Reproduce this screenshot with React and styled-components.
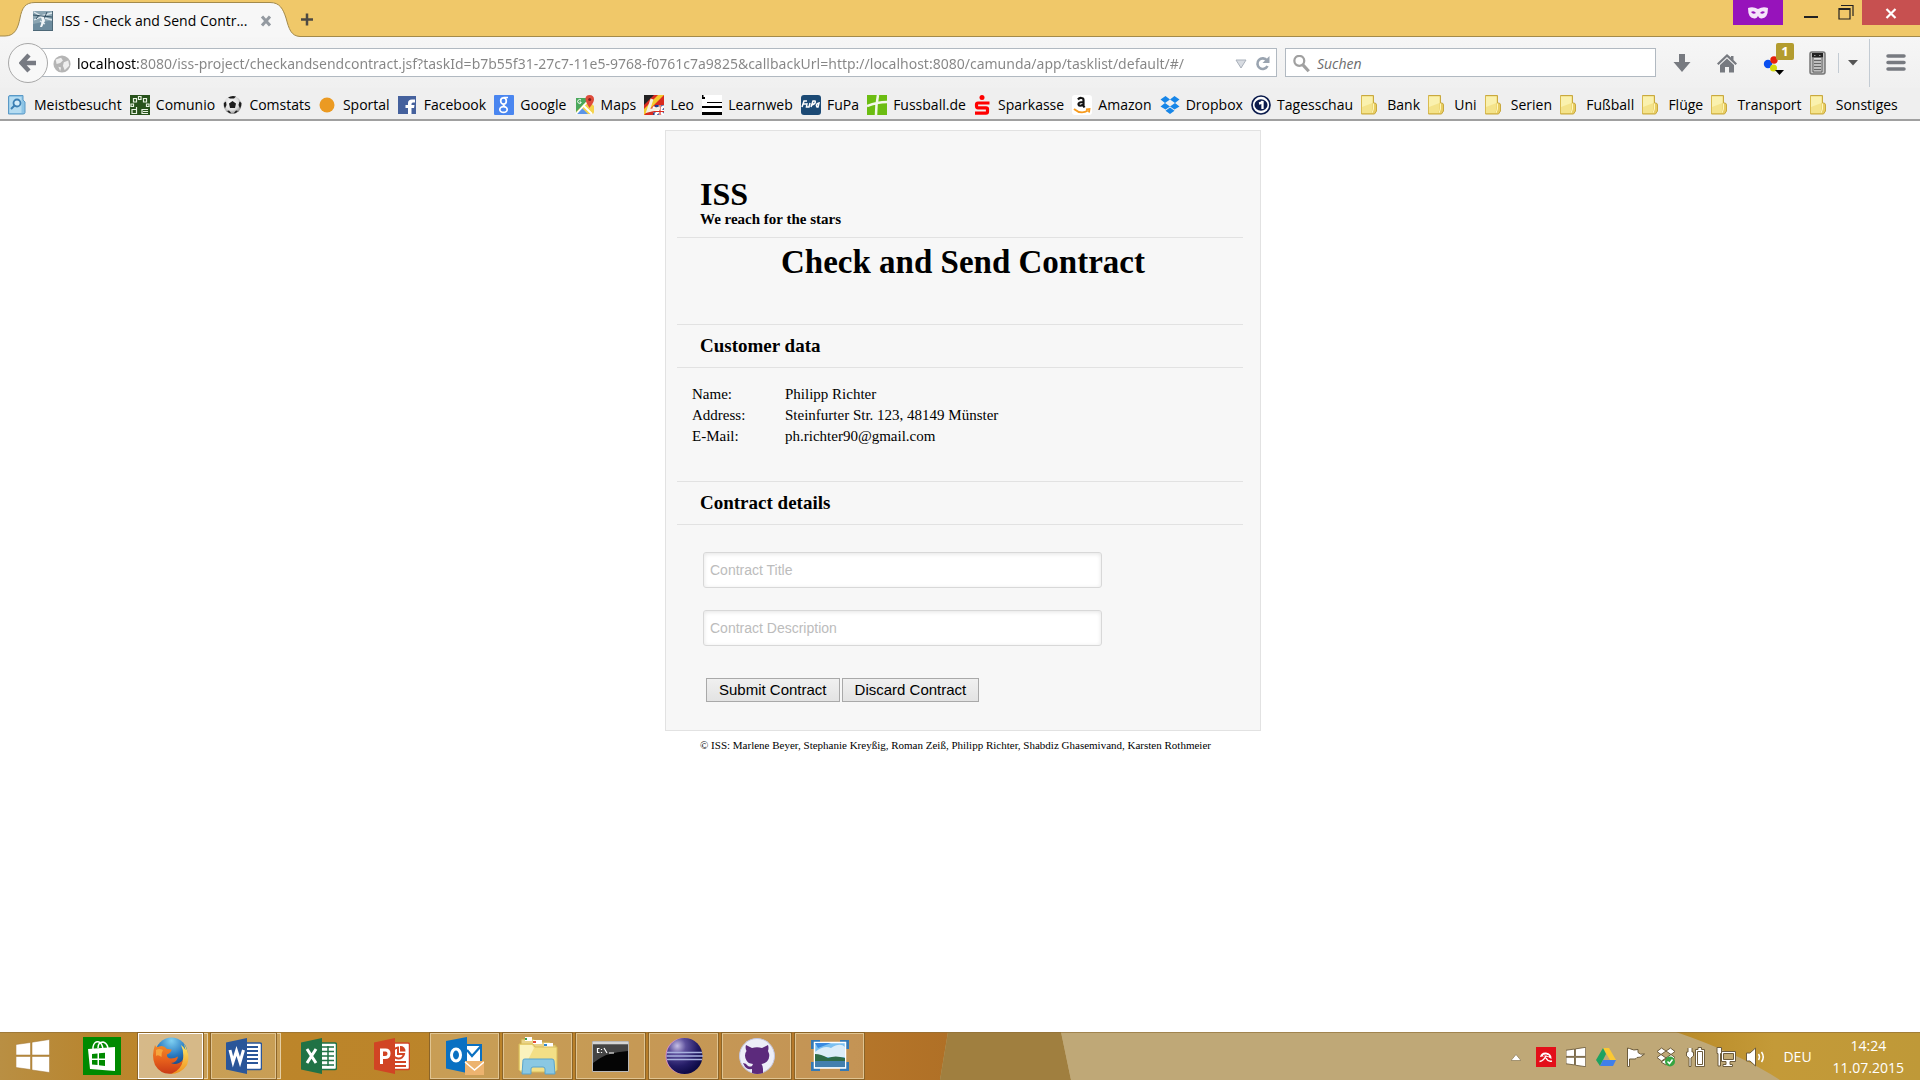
import React from "react";
import styled, { createGlobalStyle, css } from "styled-components";

const ui = `"Open Sans", "Noto Sans", sans-serif`;
const serif = `"Liberation Serif", serif`;
const sans = `"Liberation Sans", sans-serif`;

const GlobalStyle = createGlobalStyle`
  *, *::before, *::after { box-sizing: border-box; }
  body { margin: 0; background: #fff; color: #000; font-family: ${ui}; }
  svg { display: block; flex: none; }
  a { color: inherit; text-decoration: none; }
  button { font: inherit; color: inherit; margin: 0; padding: 0; border: 0; background: none; }
`;

const Screen = styled.div`
  display: flex;
  flex-direction: column;
  min-height: 100vh;
`;

/* ---------- browser window ---------- */

const TitleBar = styled.header`
  display: flex;
  align-items: stretch;
  height: 37px;
  background: #f0c869;
  box-shadow: inset 0 -1px #a38a4b;
`;

const Tab = styled.div`
  position: relative;
  display: flex;
  align-items: center;
  width: 300px;
  padding: 4px 28px 0 33px;
  gap: 8px;
`;

const TabShape = styled.svg`
  position: absolute;
  left: 0;
  top: 0;
`;

const TabTitle = styled.span`
  position: relative;
  flex: 1;
  font-size: 14px;
  line-height: 20px;
  white-space: nowrap;
`;

const IconButton = styled.button`
  position: relative;
  display: flex;
  align-items: center;
  justify-content: center;
  width: ${(p) => p.$w || 20}px;
`;

const WindowControls = styled.div`
  display: flex;
  align-items: flex-start;
  margin-left: auto;
`;

const ControlButton = styled(IconButton)`
  height: 25px;
  background: ${(p) => p.$bg || "none"};
`;

const Toolbar = styled.div`
  display: flex;
  align-items: center;
  height: 51px;
  padding-left: 8px;
  background: linear-gradient(#f6f6f6, #f0f0f0);
`;

const BackButton = styled.button`
  position: relative;
  z-index: 1;
  display: flex;
  align-items: center;
  justify-content: center;
  width: 40px;
  height: 40px;
  border: 1px solid #a8a8a8;
  border-radius: 50%;
  background: #f8f8f8;
`;

const Field = styled.div`
  display: flex;
  align-items: center;
  height: 29px;
  padding-top: 2px;
  border: 1px solid #b1b9c1;
  background: #fff;
`;

const AddressField = styled(Field)`
  flex: 1;
  margin-left: -8px;
  padding-right: 6px;
  padding-left: 12px;
  gap: 6px;
`;

const SearchField = styled(Field)`
  width: 371px;
  margin: 0 6px 0 8px;
  padding-left: 7px;
  gap: 6px;
`;

const FieldInput = styled.input`
  flex: 1;
  min-width: 0;
  padding: 0;
  border: 0;
  outline: 0;
  background: none;
  font: 14px/20px ${ui};
  color: #858585;
  &::placeholder { color: #6d6d6d; opacity: 1; font-style: italic; }
`;

const AddressInput = styled(FieldInput)`
  color: transparent;
  font-family: "Noto Sans", sans-serif;
  background: linear-gradient(90deg, #000 61px, #858585 61px);
  -webkit-background-clip: text;
  background-clip: text;
`;

const Divider = styled.span`
  width: 1px;
  height: ${(p) => p.$h}px;
  margin: 0 ${(p) => p.$m || 0}px;
  background: #c3cbd3;
`;

const BadgeHolder = styled(IconButton)`
  height: 40px;
`;

const Badge = styled.span`
  position: absolute;
  top: 0;
  right: 3px;
  width: 18px;
  height: 17px;
  border-radius: 2px;
  background: #b39c2f;
  color: #fff;
  font: bold 13px/16px ${ui};
  text-align: center;
`;

const Bookmarks = styled.nav`
  display: flex;
  align-items: center;
  justify-content: space-between;
  height: 33px;
  padding: 2px 22px 0 8px;
  border-bottom: 2px solid #a0a0a0;
  background: #efefef;
`;

const Bookmark = styled.a`
  display: flex;
  align-items: center;
  gap: 6px;
  font-size: 14px;
  line-height: 20px;
  white-space: nowrap;
`;

/* ---------- page ---------- */

const Page = styled.main`
  flex: 1;
  padding: 9px 0 0 6px;
  font-family: ${serif};
`;

const Panel = styled.section`
  max-width: 596px;
  margin: 0 auto;
  padding: 46px 17px 28px 11px;
  border: 1px solid #e2e2e2;
  background: #f7f7f7;
`;

const Brand = styled.div`
  padding: 0 0 10px 23px;
  border-bottom: 1px solid #e2e2e2;
`;

const BrandName = styled.h1`
  margin: 0;
  font-size: 32px;
  line-height: 34px;
`;

const Tagline = styled.p`
  margin: 0;
  font-size: 15px;
  font-weight: bold;
  line-height: 16px;
`;

const PageTitle = styled.h2`
  margin: 0;
  padding: 5px 0 43px 6px;
  font-size: 33px;
  line-height: 38px;
  text-align: center;
`;

const SectionTitle = styled.h3`
  margin: 0;
  padding: 11px 0 11px 23px;
  border: solid #e2e2e2;
  border-width: 1px 0;
  font-size: 19px;
  line-height: 20px;
`;

const DataTable = styled.table`
  margin: 16px 0 34px 15px;
  border-collapse: collapse;
  font-size: 15px;
  th, td { height: 21px; padding: 0; line-height: 21px; text-align: left; font-weight: normal; }
  th { width: 93px; }
`;

const ContractForm = styled.form`
  padding: 27px 0 0 26px;
`;

const TextInput = styled.input`
  display: block;
  width: 399px;
  max-width: 100%;
  height: 36px;
  margin-bottom: 22px;
  padding: 0 6px;
  border: 1px solid #d8d8d8;
  border-radius: 3px;
  background: #fff;
  box-shadow: inset 0 1px 4px #e4e4e4;
  font: 14px/20px ${sans};
  &::placeholder { color: #bcbcbc; opacity: 1; }
`;

const Actions = styled.div`
  display: flex;
  gap: 2px;
  padding: 10px 0 0 3px;
`;

const ActionButton = styled.button`
  height: 24px;
  padding: 0 12px;
  border: 1px solid #a9a9a9;
  background: linear-gradient(#f0f0f0, #e3e3e3);
  color: #000;
  font: 15px/20px ${sans};
`;

const Credits = styled.footer`
  max-width: 596px;
  margin: 0 auto;
  padding: 5px 0 0 35px;
  font-size: 11px;
  line-height: 18px;
  white-space: nowrap;
`;

/* ---------- taskbar ---------- */

const Taskbar = styled.footer`
  position: relative;
  display: flex;
  height: 48px;
  background: #bfa877;
  color: #fff;
  font-size: 14px;
`;

const Wallpaper = styled.svg`
  position: absolute;
  inset: 0;
  width: 100%;
  height: 100%;
`;

const framed = css`
  border: 1px solid #e0c491;
  outline: 1px solid #8b6428;
  outline-offset: 0;
  background: rgba(228, 210, 178, 0.32);
`;

const TaskButton = styled.button`
  position: relative;
  display: flex;
  align-items: center;
  justify-content: center;
  width: ${(p) => p.$w || 69}px;
  margin: 1px 4px 1px 0;
  ${(p) => p.$open && framed}
  ${(p) => p.$active && css`background: rgba(232, 222, 205, 0.58); border-color: #fff;`}
  ${(p) => p.$stack && css`
    width: 65px;
    margin-right: 8px;
    &::after {
      content: "";
      position: absolute;
      top: -1px;
      right: -6px;
      bottom: -1px;
      width: 4px;
      border: 1px solid #e5cfa4;
      border-left: 0;
      background: rgba(228, 210, 178, 0.32);
    }
  `}
`;

const Tray = styled.div`
  position: relative;
  display: flex;
  align-items: center;
  gap: 10px;
  margin-left: auto;
  padding: 2px 16px 0 0;
`;

const Language = styled.button`
  margin-left: 7px;
  line-height: 20px;
`;

const Clock = styled.time`
  margin-left: 11px;
  line-height: 22px;
  text-align: center;
`;

/* ---------- icons ---------- */

const Svg = ({ s = 20, w, h, box = "0 0 20 20", children }) => (
  <svg width={w || s} height={h || s} viewBox={box} aria-hidden="true" fill="none">
    {children}
  </svg>
);

const Folder = () => (
  <Svg>
    <path d="M0 1.500Q0 .5 1 .5H12.500V8H13.500Q15.500 8 15.500 10V16L13.500 19H1Q0 19 0 18Z" fill="#e8cd62" stroke="#c9a93f" />
    <path d="M1 1.500H11.500V14.500L10 18H1Z" fill="#f4e38a" />
    <path d="M1 1.500H11.500V8L1 12Z" fill="#faf1ae" />
    <path d="M12.500 8.500V14L11 18" stroke="#fff6bb" />
  </Svg>
);

const favicons = {
  most: <Svg><path d="M2 .5H15V5L17 7V17.500Q17 19 15 19H.5V2Q.5 .5 2 .5Z" fill="#8cc4e6" stroke="#5a99c6" /><path d="M1.500 2H13.500V18H1.500Z" fill="#b5dcf1" /><circle cx="9" cy="8" r="3.500" fill="#d5edf9" stroke="#3b7fb3" strokeWidth="1.800" /><path d="M6.500 10.500L3 14" stroke="#3b7fb3" strokeWidth="2" /></Svg>,
  comunio: <Svg><path d="M0 0H20V20H0Z" fill="#28521c" /><g stroke="#e8f2e2" strokeWidth="1.200"><path d="M3.500 3.500H6.500V7H3.500ZM8.500 1.500H11V4.500H8.500ZM13.500 3.500H16.500V7H13.500ZM1 9H3.500V11.500H1ZM16.500 9H19V11.500H16.500ZM6.500 12V18.500H2V14.500H6.500M18 14.500H12V18.500H18M13 16.500H18" /></g></Svg>,
  ball: (
    <Svg>
      <defs><radialGradient id="ballShade" cx=".45" cy=".4" r=".6"><stop stopColor="#fff" /><stop offset=".65" stopColor="#ddd" /><stop offset="1" stopColor="#8a8a8a" /></radialGradient></defs>
      <circle cx="9.500" cy="10" r="9" fill="url(#ballShade)" />
      <path d="M9.500 6L13 8.500L12 13H7L6 8.500ZM5 2.500Q9 0 13 1.500L11 3.500H7ZM.8 8L3 6.500L3.500 10L2 13.500Q.5 11 .8 8ZM18.500 8L16.500 6.500L15.500 10L17 13.500Q18.500 11 18.500 8ZM4 16L6 15.500L8.500 18.500Q6 18.500 4 16ZM15 16L13 15.500L10.500 18.500Q13 18.500 15 16Z" fill="#1c1c1c" />
    </Svg>
  ),
  sportal: <Svg w={18} box="0 0 18 20"><circle cx="8" cy="10" r="7.500" fill="#eb9a22" /></Svg>,
  facebook: <Svg><path d="M0 1H18V19H0Z" fill="#45619d" /><path d="M17 4.500V7.500H15Q13.500 7.500 13.500 9V10H16.500L16 13H13.500V19H10V13H7.500V10H10V8Q10 4.500 14 4.500Z" fill="#fff" /></Svg>,
  google: <Svg><rect width="20" height="20" rx="1" fill="#4a86f0" /><g stroke="#fff" strokeWidth="1.700"><ellipse cx="9.500" cy="6" rx="2.800" ry="3.200" /><ellipse cx="9.500" cy="14.500" rx="3.700" ry="2.900" /><path d="M9.500 2.500H14M9 9.500L11 12" /></g></Svg>,
  maps: <Svg><path d="M1 3H14V19H1Z" fill="#4aa85b" /><path d="M1 17L13 5L19 11V17Q19 19 17 19H3Z" fill="#f5d34c" /><path d="M6 12L13 19H2Z" fill="#5b95e8" /><path d="M1 19L13 6M8 10L17 19" stroke="#fff" strokeWidth="1.800" /><path d="M10.500 4Q10.500 0 14.500 0Q19 0 19 4.500Q19 7 14.500 13Q10.500 7 10.500 4Z" fill="#df4b3b" /><circle cx="14.700" cy="4.500" r="1.500" fill="#7d201a" /><path d="M6 5A2 2 0 1 0 6 8V7H4.500" stroke="#fff" /></Svg>,
  leo: <Svg><path d="M0 0H20V20H0Z" fill="#d92b20" /><path d="M0 0H10L0 10Z" fill="#222" /><path d="M14 0H20L0 20V14Z" fill="#f4c92d" /><path d="M11 10H20V20H9Z" fill="#223b8c" /><path d="M9 12L20 20M20 11L11 20M16 10V20M9 16H20" stroke="#fff" strokeWidth="2.500" /><path d="M16 10V20M9 16.500H20" stroke="#d92b20" strokeWidth="1.200" /><path d="M8 4L4 16L16 13" stroke="#f4efe0" strokeWidth="3" /></Svg>,
  learnweb: <Svg><path d="M0 0H20V20H0Z" fill="#fff" /><path d="M0 0H1.500V2H3V4H0ZM5 7H20V8H5ZM0 11H20V13H0ZM0 17H20V20H0Z" fill="#000" /></Svg>,
  fupa: <Svg><rect width="20" height="20" rx="3" fill="#1c4a75" /><path d="M1 12L3 6H6M2 9H5M6 8L5.500 12H8L9 8M10 12L12 6H14Q15.500 8 11 10M16 12Q14 9 18 8L17 12Z" stroke="#fff" strokeWidth="1.500" /></Svg>,
  fussball: <Svg><path d="M0 0H20V20H0Z" fill="#6cbd12" /><path d="M11 0Q9 10 9 20M0 11Q10 7 20 7" stroke="#f3f8ea" strokeWidth="2.500" /></Svg>,
  sparkasse: <Svg w={18} box="0 0 18 20"><circle cx="8" cy="2.500" r="2.500" fill="#f00" /><path d="M15.500 8H4Q2.500 8 2.500 9.500V11Q2.500 12.800 4 12.800H12Q13.500 12.800 13.500 14V16.500Q13.500 18.200 12 18.200H1" stroke="#f00" strokeWidth="3.200" /></Svg>,
  amazon: <Svg><rect width="20" height="20" rx="3" fill="#fff" /><path d="M6 4.500Q7.500 2.500 9.500 3Q11.500 3 11.500 5V11L12.500 12.500M11.500 7Q6 7 6.500 9.500Q7.500 12 11.500 9.500" stroke="#111" strokeWidth="2.200" /><path d="M2 14Q9 20 16 15.500M14 14.500L17.500 14L17 17.500" stroke="#f79b1e" strokeWidth="1.800" /></Svg>,
  dropbox: <Svg><path d="M5.500 1L10 4.500L5 8L.5 4.500ZM14.500 1L19.500 4.500L15 8L10 4.500ZM5 8L10 11.500L5.500 14.500L.5 11.500ZM15 8L19.500 11.500L14.500 14.500L10 11.500ZM10 12.500L14.500 15.800L10 19L5.500 15.800Z" fill="#1786e8" /></Svg>,
  tagesschau: <Svg><circle cx="10" cy="10" r="9" fill="#fff" stroke="#0c1c4d" strokeWidth="1.700" /><ellipse cx="10" cy="10" rx="6.500" ry="5.800" fill="#0c1c4d" /><path d="M8 8.500Q11 8 11.500 6V14" stroke="#fff" strokeWidth="2.300" /></Svg>,
  folder: <Folder />,
};

const bookmarks = [
  ["most", "Meistbesucht"], ["comunio", "Comunio"], ["ball", "Comstats"], ["sportal", "Sportal"],
  ["facebook", "Facebook"], ["google", "Google"], ["maps", "Maps"], ["leo", "Leo"],
  ["learnweb", "Learnweb"], ["fupa", "FuPa"], ["fussball", "Fussball.de"], ["sparkasse", "Sparkasse"],
  ["amazon", "Amazon"], ["dropbox", "Dropbox"], ["tagesschau", "Tagesschau"], ["folder", "Bank"],
  ["folder", "Uni"], ["folder", "Serien"], ["folder", "Fußball"], ["folder", "Flüge"],
  ["folder", "Transport"], ["folder", "Sonstiges"],
];

const WindowsLogo = ({ s, edge }) => (
  <Svg s={s} box="0 0 34 34">
    <path d="M0 5.500L14.500 3.500V16H0ZM16 3.200L33.500 .5V16H16ZM0 17.500H14.500V30.500L0 28.500ZM16 17.500H33.500V33.500L16 31Z" fill="#fff" stroke={edge || "#a27634"} strokeWidth={edge ? 1.500 : 0.500} />
  </Svg>
);

const OfficeIcon = ({ color, letter, children }) => (
  <Svg s={36} box="0 0 36 36">
    <path d="M20 5H34Q35.500 5 35.500 6.500V30Q35.500 31.500 34 31.500H20Z" fill="#fff" stroke={color} strokeWidth="1.500" />
    {children}
    <path d="M0 4.500L21 0V36L0 31.500Z" fill={color} />
    <path d={letter} stroke="#fff" strokeWidth="3" />
  </Svg>
);

const taskIcons = {
  firefox: (
    <Svg s={38} box="0 0 38 38">
      <defs>
        <linearGradient id="foxBody" x1="0" y1="0" x2="0" y2="1"><stop stopColor="#f08a2a" /><stop offset=".5" stopColor="#e8621c" /><stop offset="1" stopColor="#c93a16" /></linearGradient>
        <linearGradient id="foxTail" x1="0" y1="0" x2="0" y2="1"><stop stopColor="#fde76a" /><stop offset="1" stopColor="#f0901c" /></linearGradient>
        <radialGradient id="foxGlobe" cx=".5" cy=".1" r=".9"><stop stopColor="#7fd0f2" /><stop offset=".5" stopColor="#2b7cc2" /><stop offset="1" stopColor="#12356c" /></radialGradient>
      </defs>
      <circle cx="19.500" cy="16.500" r="16" fill="url(#foxGlobe)" />
      <path d="M32 7Q39 18 35 28Q29 37 18 37Q29 32 31 22Q32 14 29 8Q32 10 33.500 13Z" fill="url(#foxTail)" />
      <path d="M3 8Q4 11 7 9.500Q12 8 15 12L19.500 12.500Q19.500 15.500 15 17.500Q14.500 21 19 21.500Q23 21.500 26 19.500Q25 26 19 26Q25 29 31 23Q29 33 20 36.500Q9 38 3 28Q-1 19 3 8Z" fill="url(#foxBody)" />
      <path d="M4 13Q7 11 11 13Q9 16 9.500 20Q6 17 4 19Z" fill="#f6a53c" />
    </Svg>
  ),
  word: <OfficeIcon color="#2a5699" letter="M4 12L7 24L10.500 13L14 24L17.500 12"><path d="M21 9H32M21 13H32M21 17H32M21 21H32M21 25H32" stroke="#2a5699" strokeWidth="2" /></OfficeIcon>,
  excel: <OfficeIcon color="#207245" letter="M6 11L15 25M15 11L6 25"><path d="M21 9H33M21 13.500H33M21 18H33M21 22.500H33M21 27H33M27 8V28" stroke="#207245" strokeWidth="1.500" /></OfficeIcon>,
  ppt: <OfficeIcon color="#d14424" letter="M7.500 26V12H11.500Q15 12 15 15.500Q15 19.500 11 19.500H8"><path d="M24 9.500A5.500 5.500 0 1 0 30 16H24ZM21 24H32M21 28H32" stroke="#d14424" strokeWidth="2" /><path d="M26 8A5 5 0 0 1 31.500 13.500H26Z" fill="#d14424" /></OfficeIcon>,
  outlook: (
    <Svg s={38} box="0 0 38 38">
      <path d="M19 8H35V25H19Z" fill="#fff" stroke="#0a70c2" strokeWidth="2" />
      <path d="M21 13L26 19L35 9" stroke="#0a70c2" strokeWidth="2.200" />
      <path d="M0 4L21 0V36L0 31.500Z" fill="#0a70c2" />
      <ellipse cx="10" cy="18" rx="4.500" ry="6" stroke="#fff" strokeWidth="3" />
      <path d="M19 24H38V38H19Z" fill="#ecb36f" /><path d="M19 25L28.500 33L38 25" stroke="#fff" strokeWidth="1.500" />
    </Svg>
  ),
  explorer: (
    <Svg s={40} box="0 0 40 40">
      <path d="M3 3H16L18 6H32L34 9H38V20H3Z" fill="#ead489" stroke="#c6a848" />
      <path d="M7 1H14V5H7ZM15 4H24V8H15ZM26 7H35V11H26Z" fill="#fff" />
      <path d="M7 2H9V4H7Z" fill="#37a04e" /><path d="M15 5H18V7H15Z" fill="#e54b35" /><path d="M26 8H29V10H26Z" fill="#2c87cf" />
      <path d="M1 8H15L17 11H39V34L37 36H3L1 34Z" fill="#f3df86" stroke="#d9bd5b" />
      <path d="M2 9H14L16 12L5 34H2Z" fill="#fbf2bd" />
      <path d="M5 24Q5 23 7 23H34Q36 23 36 25L37 38H27V33Q27 31 25 31H15Q13 31 13 33V38H4Z" fill="#8ac8e3" stroke="#5aa4cb" />
    </Svg>
  ),
  cmd: (
    <Svg w={37} h={31} box="0 0 37 31">
      <path d="M.5 .5H36.500V30.500H.5Z" fill="#050505" stroke="#b9b9b9" /><path d="M1 1H36V3.500H1Z" fill="#d4d4d4" />
      <path d="M1 4H36V10Q14 11 1 22Z" fill="#444" />
      <path d="M7.500 7.500H5.500V11.500H7.500M9.500 8V9M9.500 11V12M12 7L15 12M17 12H22" stroke="#fff" strokeWidth="1.200" />
    </Svg>
  ),
  eclipse: (
    <Svg s={38} box="0 0 38 38">
      <defs><radialGradient id="ecl" cx=".3" cy=".22" r=".8"><stop stopColor="#c6bfe6" /><stop offset=".3" stopColor="#5d509c" /><stop offset=".7" stopColor="#241c66" /><stop offset="1" stopColor="#0d0a45" /></radialGradient></defs>
      <circle cx="18.500" cy="19" r="18" fill="#d991c6" /><circle cx="19.500" cy="19" r="18" fill="url(#ecl)" />
      <path d="M2 15.500H37M1.500 19H38M2 22.500H37" stroke="#a9b2df" strokeWidth="1.300" />
    </Svg>
  ),
  github: (
    <Svg s={38} box="0 0 38 38">
      <circle cx="19" cy="19" r="17.500" fill="#eceef8" stroke="#c3c6e2" />
      <path d="M8 8L14 11Q19 9.500 24 11L30 8Q31 11 30 14Q33 20 29 24.500Q27 26.500 23.500 27Q25 29 25 32V36Q19 38 14 36V32Q8 33 6 28L5 26Q8 26 10 29Q12 30 14 29L15 27Q10 26.500 8.500 23.500Q5.500 18 8.500 14Q7 11 8 8Z" fill="#5c2a7c" />
    </Svg>
  ),
  photo: (
    <Svg w={38} h={34} box="0 0 38 34">
      <path d="M0 1H9V10H0ZM29 1H38V10H29ZM0 23H9V32H0ZM29 23H38V32H29Z" fill="#3479b5" />
      <path d="M3.500 3.500H34.500V29H3.500Z" fill="#7cc0f0" stroke="#fff" strokeWidth="1.500" />
      <path d="M4 4H20L7 9Z" fill="#3a8ae0" /><path d="M4 13Q13 6 20 9Q29 3 34 8V18H4Z" fill="#dcedf8" />
      <path d="M4 15Q10 15 17 19Q24 16 34 19V23H4Z" fill="#2e6b47" /><path d="M4 22H34V28H4Z" fill="#427fae" />
    </Svg>
  ),
};

const tasks = [
  { id: "firefox", label: "Firefox", open: true, active: true, stack: true },
  { id: "word", label: "Word", open: true, stack: true },
  { id: "excel", label: "Excel" },
  { id: "ppt", label: "PowerPoint" },
  { id: "outlook", label: "Outlook", open: true },
  { id: "explorer", label: "Explorer", open: true },
  { id: "cmd", label: "Command prompt", open: true },
  { id: "eclipse", label: "Eclipse", open: true },
  { id: "github", label: "GitHub", open: true },
  { id: "photo", label: "Snapshot", open: true },
];

const dark = "#6d5c3c";
const trayIcons = [
  ["Avira", <Svg key="i"><path d="M0 0H20V20H0Z" fill="#e30f19" /><path d="M4 10Q5 5 10 5.500Q16 6.500 15.500 12Q11 8 4 10Z" fill="#fff" /><path d="M11 7Q8 14 3.500 14.500M10 11Q12 15 16 14" stroke="#fff" strokeWidth="1.400" /><path d="M7 8.500Q10 7 13 9" stroke="#e30f19" /></Svg>],
  ["Windows", <WindowsLogo key="i" s={20} edge={dark} />],
  ["Drive", <Svg key="i"><path d="M7 1H13L20 13H14Z" fill="#fbc934" /><path d="M7 1L10 7L4 19L0 13Z" fill="#1da261" /><path d="M7 13H20L17 19H4Z" fill="#3f7fea" /></Svg>],
  ["Action center", <Svg key="i"><path d="M1.500 1V19.500H3.500V12H9Q10 12 11 10.500Q14 11.500 18.500 7Q14 8 12 5.500V2.500Q8 4 3.500 1.500Z" fill="#fff" stroke={dark} /></Svg>],
  ["Dropbox", <Svg key="i"><path d="M5.500 1L10 4L5 7.500L1 4.500ZM14.500 1L19 4.500L15 7.500L10 4ZM5 7.500L10 11L5.500 14L1 10.500ZM15 7.500L19 10.500L14.500 14L10 11ZM10 12L14 15L10 18L5 15Z" fill="#fff" stroke={dark} /><circle cx="14" cy="14.500" r="5" fill="#35a542" /><path d="M11.500 14.500L13.500 16.500L16.500 12.500" stroke="#fff" strokeWidth="1.500" /></Svg>],
  ["Power", <Svg key="i"><path d="M9.500 2.500H12V.5H15.500V2.500H18.500V19.500H9.500Z" fill="#fff" stroke={dark} /><path d="M11.500 4.500H16.500V17.500H11.500Z" stroke={dark} /><path d="M2 1V5H.5V9L3 11V19.500H5V11L7.500 9V5H6V1" fill="#fff" stroke={dark} /></Svg>],
  ["Network", <Svg key="i"><path d="M5.500 4.500H19.500V14.500H14V17.500H16.500V19.500H7V17.500H10V14.500H5.500Z" fill="#fff" stroke={dark} /><path d="M7.500 6.500H17.500V12.500H7.500Z" fill="#c2a972" stroke={dark} /><path d="M1 .5H5.500V6.500H4.500V19H2V6.500H1Z" fill="#fff" stroke={dark} /></Svg>],
  ["Volume", <Svg key="i"><path d="M.5 6H4L9.500 1V19L4 14H.5Z" fill="#fff" stroke={dark} /><path d="M12.500 7Q14.500 10 12.500 13M15.500 5Q19 10 15.500 15" stroke="#fff" strokeWidth="1.500" /></Svg>],
];

function BrowserChrome() {
  return (
    <>
      <TitleBar>
        <Tab>
          <TabShape width="300" height="37" aria-hidden="true">
            <path d="M0 37V36H5C15 36 18 28 20 18C22 8 25 2.500 35 2.500H270C280 2.500 283 9 286 18C289 29 291 36 300 36.500V37Z" fill="#f7f7f7" />
            <path d="M0 36H5C15 36 18 28 20 18C22 8 25 2.500 35 2.500H270C280 2.500 283 9 286 18C289 29 291 36 300 36.500" fill="none" stroke="#a38a4b" />
          </TabShape>
          <IconButton as="span">
            <Svg>
              <rect width="20" height="20" rx="1" fill="#8ba5b2" />
              <path d="M0 13L20 9V20H0Z" fill="#6d8c9e" />
              <path d="M1 1L8 5L19 2M1 9L8 6L19 9M7 10L12 13" stroke="#dfe9ee" strokeWidth="1.300" />
              <path d="M0 4L19 6M3 8L6 4M14 1L11 8" stroke="#29475a" strokeWidth=".9" />
              <path d="M8 6H11L12 10L9 16H7L9 10Z" fill="#f1f6f8" />
              <path d="M0 19.500H20M19.500 0V20" stroke="#4d6877" />
            </Svg>
          </IconButton>
          <TabTitle>ISS - Check and Send Contr...</TabTitle>
          <IconButton $w={12} aria-label="Close tab">
            <Svg s={12} box="0 0 12 12"><path d="M2 1.500L10 10.500M10 1.500L2 10.500" stroke="#949aa1" strokeWidth="3" /></Svg>
          </IconButton>
        </Tab>
        <IconButton $w={14} aria-label="New tab">
          <Svg s={14} box="0 0 14 14"><path d="M7 1.500V13.500M1 7.500H13" stroke="#4d4a43" strokeWidth="2.500" /></Svg>
        </IconButton>
        <WindowControls>
          <ControlButton $w={50} $bg="#9713bb" as="span">
            <Svg w={20} h={12} box="0 0 20 12"><path d="M0 1Q5 -1 10 2Q15 -1 20 1Q20 12 13 11.500Q11 11 10 9Q9 11 7 11.500Q0 12 0 1Z" fill="#f5e4fa" /><path d="M3 5Q6 3 8 6Q5 8 3 5ZM17 5Q14 3 12 6Q15 8 17 5Z" fill="#9713bb" /></Svg>
          </ControlButton>
          <ControlButton $w={55} aria-label="Minimize">
            <Svg w={14} h={10} box="0 0 14 10"><path d="M0 8H14V10H0Z" fill="#222" /></Svg>
          </ControlButton>
          <ControlButton $w={24} aria-label="Restore">
            <Svg w={24} h={15} box="0 0 24 15"><path d="M1 3.500H12V14H1ZM.5 4.500H12.500M3 .5H15V11" stroke="#222" strokeWidth="1.200" /></Svg>
          </ControlButton>
          <ControlButton $w={58} $bg="#c75050" aria-label="Close">
            <Svg s={12} box="0 0 12 12"><path d="M1.500 2L10.500 11M10.500 2L1.500 11" stroke="#fff" strokeWidth="2.200" /></Svg>
          </ControlButton>
        </WindowControls>
      </TitleBar>

      <Toolbar>
        <BackButton aria-label="Back">
          <Svg w={18} h={20} box="0 0 18 20"><path d="M10 2L2.500 10L10 18M3 10H17" stroke="#777a82" strokeWidth="4.500" /></Svg>
        </BackButton>
        <AddressField>
          <Svg s={18}><circle cx="10" cy="10" r="9.500" fill="#b5b5b5" /><path d="M3 5L9 3L11 6L8 9L4 10ZM12 8L17 6L18 12L13 17L11 12ZM6 13L9 14L8 18Z" fill="#eee" /></Svg>
          <AddressInput
            aria-label="Address"
            defaultValue="localhost:8080/iss-project/checkandsendcontract.jsf?taskId=b7b55f31-27c7-11e5-9768-f0761c7a9825&callbackUrl=http://localhost:8080/camunda/app/tasklist/default/#/"
          />
          <IconButton $w={14} aria-label="History">
            <Svg w={12} h={10} box="0 0 12 10"><path d="M1 1H11L6 9Z" fill="#d8dce2" stroke="#a9b0ba" /></Svg>
          </IconButton>
          <IconButton $w={16} aria-label="Reload">
            <Svg s={15} box="0 0 15 15"><path d="M12 4.500A5.300 5.300 0 1 0 12.500 10" stroke="#9aa4b0" strokeWidth="2.600" /><path d="M14.500 0V7H7.500Z" fill="#9aa4b0" /></Svg>
          </IconButton>
        </AddressField>
        <SearchField>
          <Svg s={18}><circle cx="7" cy="6.500" r="5.500" stroke="#a0a0a0" strokeWidth="2.500" /><path d="M11 11L17.500 18" stroke="#a0a0a0" strokeWidth="3.500" /></Svg>
          <FieldInput aria-label="Suchen" placeholder="Suchen" />
        </SearchField>
        <IconButton $w={40} aria-label="Downloads"><Svg><path d="M7 1H13V9H18.500L10 19L1.500 9H7Z" fill="#777a80" /></Svg></IconButton>
        <IconButton $w={49} aria-label="Home"><Svg><path d="M10 1L14 4.500V3H16.500V7L20 10.500L18.500 12L10 4L1.500 12L0 10.500Z" fill="#777a80" /><path d="M10 5.500L17 12V19.500H12V14H8V19.500H3V12Z" fill="#777a80" /></Svg></IconButton>
        <BadgeHolder $w={46} aria-label="Extension">
          <Svg s={24} box="0 0 24 24"><circle cx="6" cy="13" r="4.200" fill="#0a4ff0" /><circle cx="12" cy="9" r="3.700" fill="#e6200a" /><circle cx="11.500" cy="17" r="3.500" fill="#d5d80a" /><path d="M13 19H22L17.500 24Z" fill="#000" /></Svg>
          <Badge>1</Badge>
        </BadgeHolder>
        <IconButton $w={41} aria-label="Tool"><Svg w={18} h={24} box="0 0 18 24"><rect x="1" y="1" width="15" height="22" rx="2" fill="#c4c4c4" stroke="#777" strokeWidth="1.500" /><path d="M3 2H14V6.500H3Z" fill="#222" /><path d="M5 4.500H6.500M10 4.500H11.500" stroke="#999" /><path d="M4 7V21H13V7" fill="#ddd" stroke="#555" /><path d="M5 9.500H12M5 12.500H12M5 15.500H12M5 18.500H12" stroke="#666" strokeWidth="1.300" /></Svg></IconButton>
        <Divider $h={20} />
        <IconButton $w={28} aria-label="More"><Svg w={10} h={6} box="0 0 10 6"><path d="M0 0H10L5 5.500Z" fill="#555" /></Svg></IconButton>
        <Divider $h={48} $m={2} />
        <IconButton $w={48} aria-label="Menu"><Svg><path d="M2 3H18M2 9.500H18M2 16H18" stroke="#777a80" strokeWidth="3.500" strokeLinecap="round" /></Svg></IconButton>
      </Toolbar>

      <Bookmarks aria-label="Bookmarks">
        {bookmarks.map(([icon, name]) => (
          <Bookmark key={name} href="#">
            {favicons[icon]}
            {name}
          </Bookmark>
        ))}
      </Bookmarks>
    </>
  );
}

function ContractPage() {
  return (
    <Page>
      <Panel>
        <Brand>
          <BrandName>ISS</BrandName>
          <Tagline>We reach for the stars</Tagline>
        </Brand>
        <PageTitle>Check and Send Contract</PageTitle>
        <SectionTitle>Customer data</SectionTitle>
        <DataTable>
          <tbody>
            <tr><th scope="row">Name:</th><td>Philipp Richter</td></tr>
            <tr><th scope="row">Address:</th><td>Steinfurter Str. 123, 48149 Münster</td></tr>
            <tr><th scope="row">E-Mail:</th><td>ph.richter90@gmail.com</td></tr>
          </tbody>
        </DataTable>
        <SectionTitle>Contract details</SectionTitle>
        <ContractForm onSubmit={(e) => e.preventDefault()}>
          <TextInput aria-label="Contract Title" placeholder="Contract Title" />
          <TextInput aria-label="Contract Description" placeholder="Contract Description" />
          <Actions>
            <ActionButton type="submit">Submit Contract</ActionButton>
            <ActionButton type="button">Discard Contract</ActionButton>
          </Actions>
        </ContractForm>
      </Panel>
      <Credits>© ISS: Marlene Beyer, Stephanie Kreyßig, Roman Zeiß, Philipp Richter, Shabdiz Ghasemivand, Karsten Rothmeier</Credits>
    </Page>
  );
}

function DesktopTaskbar() {
  return (
    <Taskbar>
      <Wallpaper viewBox="0 0 1920 48" preserveAspectRatio="none" aria-hidden="true">
        <defs>
          <linearGradient id="amber"><stop stopColor="#b98f43" /><stop offset=".1" stopColor="#b8852f" /><stop offset=".16" stopColor="#bd862a" /><stop offset=".5" stopColor="#bb842a" /><stop offset=".9" stopColor="#b5762a" /><stop offset="1" stopColor="#b07026" /></linearGradient>
          <linearGradient id="gold"><stop stopColor="#b98a28" /><stop offset=".4" stopColor="#c49a38" /><stop offset="1" stopColor="#bf9938" /></linearGradient>
        </defs>
        <path d="M0 0H948L940 48H0Z" fill="url(#amber)" />
        <path d="M948 0H1061L1071 48H940Z" fill="#a07f3f" />
        <path d="M1061 0H1920V48H1071Z" fill="#bfa877" />
        <path d="M1676 0H1920V48H1780Q1740 22 1676 0Z" fill="url(#gold)" />
        <path d="M0 0H1920V1H0Z" fill="#8d6c36" opacity=".6" />
      </Wallpaper>
      <TaskButton $w={65} aria-label="Start"><WindowsLogo s={34} /></TaskButton>
      <TaskButton $w={65} aria-label="Store">
        <Svg s={38} box="0 0 38 38"><path d="M0 0H38V38H0Z" fill="#008a00" /><path d="M5 12L32 10V34L7 32Z" fill="#fff" /><path d="M10 15V10Q11 4 16 5Q19 6 20 12M15 11Q15 5 20 5Q24 6 25 11" stroke="#fff" strokeWidth="1.500" /><path d="M9 17L14.500 16.500V21.500H9ZM16 16.300L22 15.800V21.500H16ZM9 23H14.500V28L9 27.500ZM16 23H22V29L16 28.300Z" fill="#008a00" /></Svg>
      </TaskButton>
      {tasks.map((t) => (
        <TaskButton key={t.id} $open={t.open} $active={t.active} $stack={t.stack} aria-label={t.label}>
          {taskIcons[t.id]}
        </TaskButton>
      ))}
      <Tray>
        <IconButton aria-label="Show hidden icons"><Svg w={10} h={7} box="0 0 10 7"><path d="M0 6.500L5 .5L10 6.500Z" fill="#fff" stroke="#8a7955" strokeWidth=".7" /></Svg></IconButton>
        {trayIcons.map(([label, icon]) => (
          <IconButton key={label} aria-label={label}>{icon}</IconButton>
        ))}
        <Language>DEU</Language>
        <Clock dateTime="2015-07-11T14:24">14:24<br />11.07.2015</Clock>
      </Tray>
    </Taskbar>
  );
}

export default function App() {
  return (
    <Screen>
      <GlobalStyle />
      <BrowserChrome />
      <ContractPage />
      <DesktopTaskbar />
    </Screen>
  );
}
